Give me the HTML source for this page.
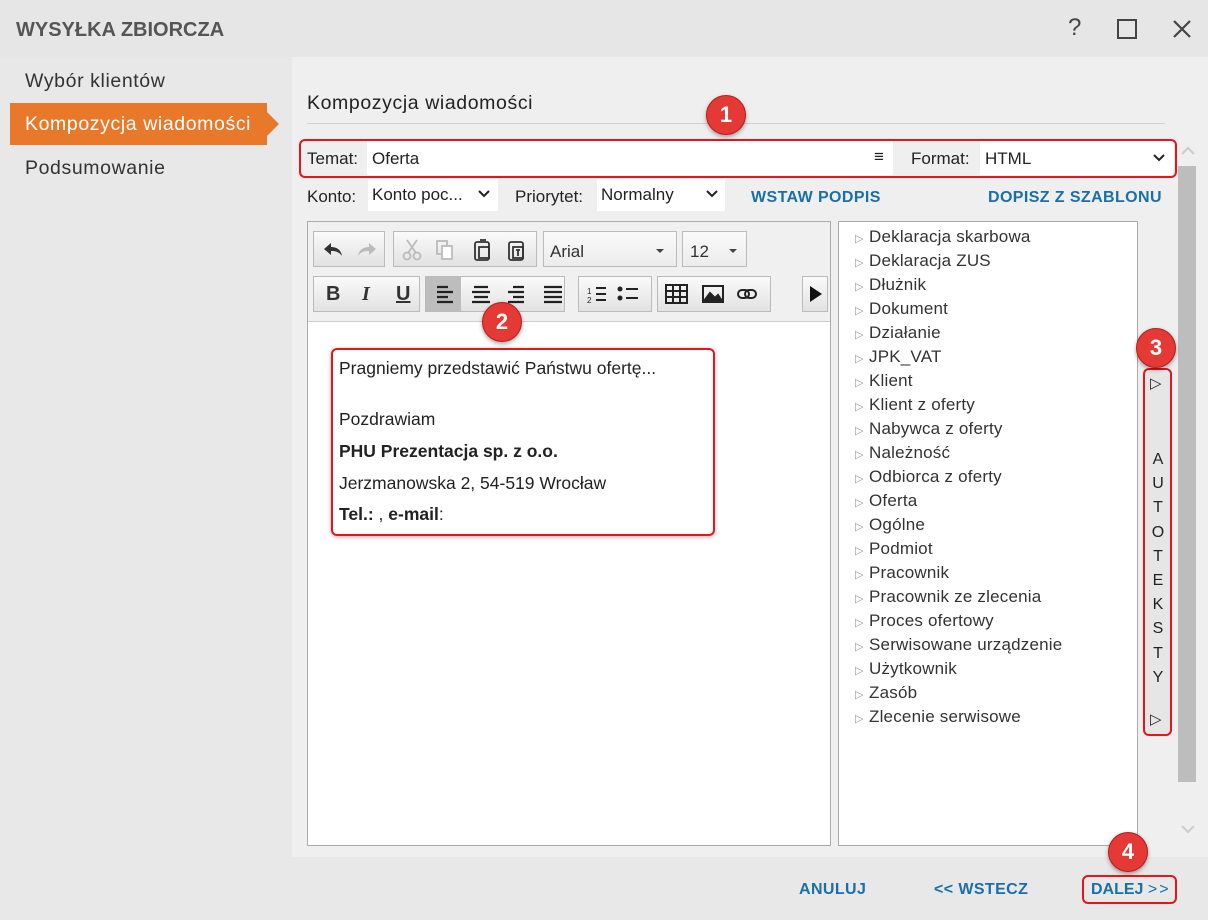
<!DOCTYPE html>
<html><head><meta charset="utf-8"><style>
*{box-sizing:border-box;margin:0;padding:0}
body{width:1208px;height:920px;overflow:hidden;background:#e8e8e8;font-family:"Liberation Sans","DejaVu Sans",sans-serif;position:relative;color:#222}
.a{position:absolute}
.t{font-size:17px;color:#333;white-space:nowrap}
.badge{position:absolute;width:40px;height:40px;border-radius:50%;background:#e53935;border:1px solid #b71c1c;color:#fff;font-weight:bold;font-size:22px;text-align:center;line-height:38px;box-shadow:0 2px 4px rgba(0,0,0,.35)}
.rb{position:absolute;border:2px solid #e8141c;border-radius:6px}
.btn{position:absolute;background:linear-gradient(#fafafa,#e2e2e2);border:1px solid #bbb;height:36px}
.blue{color:#1a6fa8;font-weight:bold;font-size:16px}
.tree div{height:24px;font-size:17px;color:#333;white-space:nowrap;letter-spacing:.2px}
.tree span{display:inline-block;width:14px;color:#999;font-size:11px}
.ed{font-family:"Liberation Sans",sans-serif;font-size:17.5px;color:#222;white-space:nowrap;position:absolute;left:339px}
.side{font-size:19.5px;letter-spacing:.6px}
</style></head><body>
<div class="a" style="left:0;top:0;width:1208px;height:57px;background:#e6e6e6"></div>
<div class="a t" style="left:16px;top:19px;font-weight:bold;font-size:20px;color:#555">WYSYŁKA ZBIORCZA</div>
<div class="a" style="left:1068px;top:14px;font-size:24px;color:#444">?</div>
<div class="a" style="left:1117px;top:19px;width:20px;height:20px;border:2px solid #444"></div>
<svg class="a" style="left:1172px;top:19px" width="20" height="20"><path d="M2 2L18 18M18 2L2 18" stroke="#444" stroke-width="2.2"/></svg>

<div class="a t side" style="left:25px;top:70px">Wybór klientów</div>
<div class="a" style="left:10px;top:103px;width:257px;height:42px;background:#e8792b"></div>
<div class="a" style="left:267px;top:112px;width:0;height:0;border-top:12px solid transparent;border-bottom:12px solid transparent;border-left:12px solid #e8792b"></div>
<div class="a t side" style="left:25px;top:113px;color:#fff">Kompozycja wiadomości</div>
<div class="a t side" style="left:25px;top:157px">Podsumowanie</div>

<div class="a" style="left:292px;top:57px;width:916px;height:800px;background:#efefef"></div>
<div class="a t side" style="left:307px;top:92px;color:#222">Kompozycja wiadomości</div>
<div class="a" style="left:307px;top:123px;width:858px;height:1px;background:#d0d0d0"></div>

<div class="a t" style="left:307px;top:149px;color:#222">Temat:</div>
<div class="a" style="left:367px;top:141px;width:526px;height:34px;background:#fff"></div>
<div class="a t" style="left:372px;top:149px;color:#222">Oferta</div>
<div class="a t" style="left:874px;top:147px;color:#222">≡</div>
<div class="a t" style="left:911px;top:149px;color:#222">Format:</div>
<div class="a" style="left:980px;top:141px;width:194px;height:34px;background:#fff"></div>
<div class="a t" style="left:985px;top:149px;color:#222">HTML</div>
<svg class="a" style="left:1153px;top:154px" width="12" height="8"><path d="M1 1L6 6L11 1" stroke="#222" stroke-width="2" fill="none"/></svg>
<div class="rb" style="left:299px;top:139px;width:878px;height:39px"></div>

<div class="a t" style="left:307px;top:187px;color:#222">Konto:</div>
<div class="a" style="left:368px;top:179px;width:130px;height:32px;background:#fff"></div>
<div class="a t" style="left:372px;top:185px;color:#222">Konto poc...</div>
<svg class="a" style="left:478px;top:190px" width="12" height="8"><path d="M1 1L6 6L11 1" stroke="#222" stroke-width="2" fill="none"/></svg>
<div class="a t" style="left:515px;top:187px;color:#222">Priorytet:</div>
<div class="a" style="left:597px;top:179px;width:128px;height:32px;background:#fff"></div>
<div class="a t" style="left:601px;top:185px;color:#222">Normalny</div>
<svg class="a" style="left:706px;top:190px" width="12" height="8"><path d="M1 1L6 6L11 1" stroke="#222" stroke-width="2" fill="none"/></svg>
<div class="a blue" style="left:751px;top:189px;letter-spacing:.4px">WSTAW PODPIS</div>
<div class="a blue" style="left:988px;top:189px;letter-spacing:.4px">DOPISZ Z SZABLONU</div>

<div class="a" style="left:307px;top:221px;width:524px;height:625px;background:#fff;border:1px solid #aaa"></div>
<div class="a" style="left:308px;top:222px;width:522px;height:100px;background:#f0f0f0;border-bottom:1px solid #ccc"></div>
<div class="btn" style="left:313px;top:231px;width:72px"></div>
<svg class="a" style="left:322px;top:241px" width="56" height="18"><path d="M2 8L9 2V6C15 6 19 9 20 15C17 11 14 10 9 10V14Z" fill="#333"/><path d="M54 8L47 2V6C41 6 37 9 36 15C39 11 42 10 47 10V14Z" fill="#bbb"/></svg>
<div class="btn" style="left:393px;top:231px;width:144px"></div>
<svg class="a" style="left:402px;top:238px" width="130" height="24"><g stroke="#bbb" stroke-width="1.8" fill="none"><circle cx="5" cy="18" r="3.5"/><circle cx="15" cy="18" r="3.5"/><path d="M6 15L15 2M14 15L5 2"/><rect x="35" y="3" width="10" height="13"/><rect x="40" y="8" width="10" height="13" fill="#fff"/></g><g stroke="#333" stroke-width="1.8" fill="none"><rect x="73" y="4" width="14" height="18" rx="2"/><rect x="77" y="9" width="10" height="11"/><path d="M78 2h6"/><rect x="107" y="4" width="14" height="18" rx="2"/><rect x="111" y="9" width="10" height="11"/><path d="M114 12h4M116 12v6"/></g></svg>
<div class="btn" style="left:543px;top:231px;width:134px;background:linear-gradient(#fafafa,#ececec)"></div>
<div class="a t" style="left:550px;top:242px;color:#333">Arial</div>
<div class="a" style="left:656px;top:249px;border-left:4px solid transparent;border-right:4px solid transparent;border-top:4px solid #444"></div>
<div class="btn" style="left:682px;top:231px;width:65px;background:linear-gradient(#fafafa,#ececec)"></div>
<div class="a t" style="left:690px;top:242px;color:#333">12</div>
<div class="a" style="left:729px;top:249px;border-left:4px solid transparent;border-right:4px solid transparent;border-top:4px solid #444"></div>

<div class="btn" style="left:313px;top:276px;width:107px"></div>
<div class="a" style="left:326px;top:283px;font-weight:bold;font-size:20px;color:#333">B</div>
<div class="a" style="left:362px;top:283px;font-weight:bold;font-style:italic;font-size:20px;color:#333;font-family:'Liberation Serif',serif">I</div>
<div class="a" style="left:396px;top:283px;font-weight:bold;font-size:20px;color:#333;text-decoration:underline">U</div>
<div class="btn" style="left:425px;top:276px;width:140px"></div>
<div class="a" style="left:426px;top:277px;width:35px;height:34px;background:#bdbdbd"></div>
<svg class="a" style="left:434px;top:284px" width="130" height="20"><g stroke="#222" stroke-width="2.2"><path d="M3 3h11M3 8h16M3 13h11M3 18h16"/><path d="M40 3h14M38 8h18M40 13h14M38 18h18"/><path d="M79 3h11M74 8h16M79 13h11M74 18h16"/><path d="M110 3h18M110 8h18M110 13h18M110 18h18"/></g></svg>
<div class="btn" style="left:578px;top:276px;width:74px"></div>
<svg class="a" style="left:586px;top:284px" width="60" height="20"><g stroke="#222" stroke-width="2"><path d="M10 4h10M10 10h10M10 16h10M40 5h12M40 14h12"/></g><text x="1" y="10" font-size="8" fill="#222">1</text><text x="1" y="19" font-size="8" fill="#222">2</text><circle cx="34" cy="5" r="2.5" fill="#222"/><circle cx="34" cy="14" r="2.5" fill="#222"/></svg>
<div class="btn" style="left:657px;top:276px;width:114px"></div>
<svg class="a" style="left:665px;top:283px" width="100" height="22"><g stroke="#222" stroke-width="2" fill="none"><rect x="1" y="2" width="21" height="18"/><path d="M1 8h21M1 14h21M8 2v18M15 2v18"/><rect x="38" y="3" width="20" height="16"/><path d="M39 18L45 10L50 15L53 12L57 18Z" fill="#222"/><rect x="73" y="7" width="11" height="8" rx="4"/><rect x="80" y="7" width="11" height="8" rx="4"/></g></svg>
<div class="btn" style="left:802px;top:276px;width:26px"></div>
<div class="a" style="left:810px;top:286px;border-top:8px solid transparent;border-bottom:8px solid transparent;border-left:12px solid #111"></div>

<div class="ed" style="top:358px">Pragniemy przedstawić Państwu ofertę...</div>
<div class="ed" style="top:409px">Pozdrawiam</div>
<div class="ed" style="top:441px;font-weight:bold">PHU Prezentacja sp. z o.o.</div>
<div class="ed" style="top:473px">Jerzmanowska 2, 54-519 Wrocław</div>
<div class="ed" style="top:504px"><b>Tel.:</b> , <b>e-mail</b>:</div>
<div class="rb" style="left:331px;top:348px;width:384px;height:188px;box-shadow:0 1px 4px rgba(0,0,0,.3)"></div>

<div class="a" style="left:838px;top:221px;width:300px;height:625px;background:#fff;border:1px solid #aaa"></div>
<div class="a tree" style="left:855px;top:227px">
<div><span>▷</span>Deklaracja skarbowa</div><div><span>▷</span>Deklaracja ZUS</div><div><span>▷</span>Dłużnik</div><div><span>▷</span>Dokument</div><div><span>▷</span>Działanie</div><div><span>▷</span>JPK_VAT</div><div><span>▷</span>Klient</div><div><span>▷</span>Klient z oferty</div><div><span>▷</span>Nabywca z oferty</div><div><span>▷</span>Należność</div><div><span>▷</span>Odbiorca z oferty</div><div><span>▷</span>Oferta</div><div><span>▷</span>Ogólne</div><div><span>▷</span>Podmiot</div><div><span>▷</span>Pracownik</div><div><span>▷</span>Pracownik ze zlecenia</div><div><span>▷</span>Proces ofertowy</div><div><span>▷</span>Serwisowane urządzenie</div><div><span>▷</span>Użytkownik</div><div><span>▷</span>Zasób</div><div><span>▷</span>Zlecenie serwisowe</div>
</div>

<div class="a" style="left:1144px;top:369px;width:27px;height:366px;background:#e6e6e6"></div>
<div class="a" style="left:1150px;top:374px;font-size:15px;color:#222">▷</div>
<div class="a" style="left:1151px;top:448px;width:14px;text-align:center;font-size:16px;line-height:24.2px;color:#222">A<br>U<br>T<br>O<br>T<br>E<br>K<br>S<br>T<br>Y</div>
<div class="a" style="left:1150px;top:710px;font-size:15px;color:#222">▷</div>
<div class="rb" style="left:1143px;top:368px;width:29px;height:368px"></div>

<svg class="a" style="left:1180px;top:145px" width="16" height="12"><path d="M2 9L8 3L14 9" stroke="#ccc" stroke-width="2" fill="none"/></svg>
<div class="a" style="left:1178px;top:166px;width:18px;height:616px;background:#bdbdbd"></div>
<svg class="a" style="left:1180px;top:823px" width="16" height="12"><path d="M2 3L8 9L14 3" stroke="#ccc" stroke-width="2" fill="none"/></svg>

<div class="a blue" style="left:799px;top:881px;letter-spacing:.4px">ANULUJ</div>
<div class="a blue" style="left:934px;top:881px;letter-spacing:.4px">&lt;&lt; WSTECZ</div>
<div class="a blue" style="left:1091px;top:881px">DALEJ <span style="font-weight:normal;letter-spacing:2px">&gt;&gt;</span></div>
<div class="rb" style="left:1082px;top:875px;width:95px;height:29px"></div>

<div class="badge" style="left:706px;top:95px">1</div>
<div class="badge" style="left:482px;top:302px">2</div>
<div class="badge" style="left:1136px;top:328px">3</div>
<div class="badge" style="left:1108px;top:832px">4</div>
</body></html>
